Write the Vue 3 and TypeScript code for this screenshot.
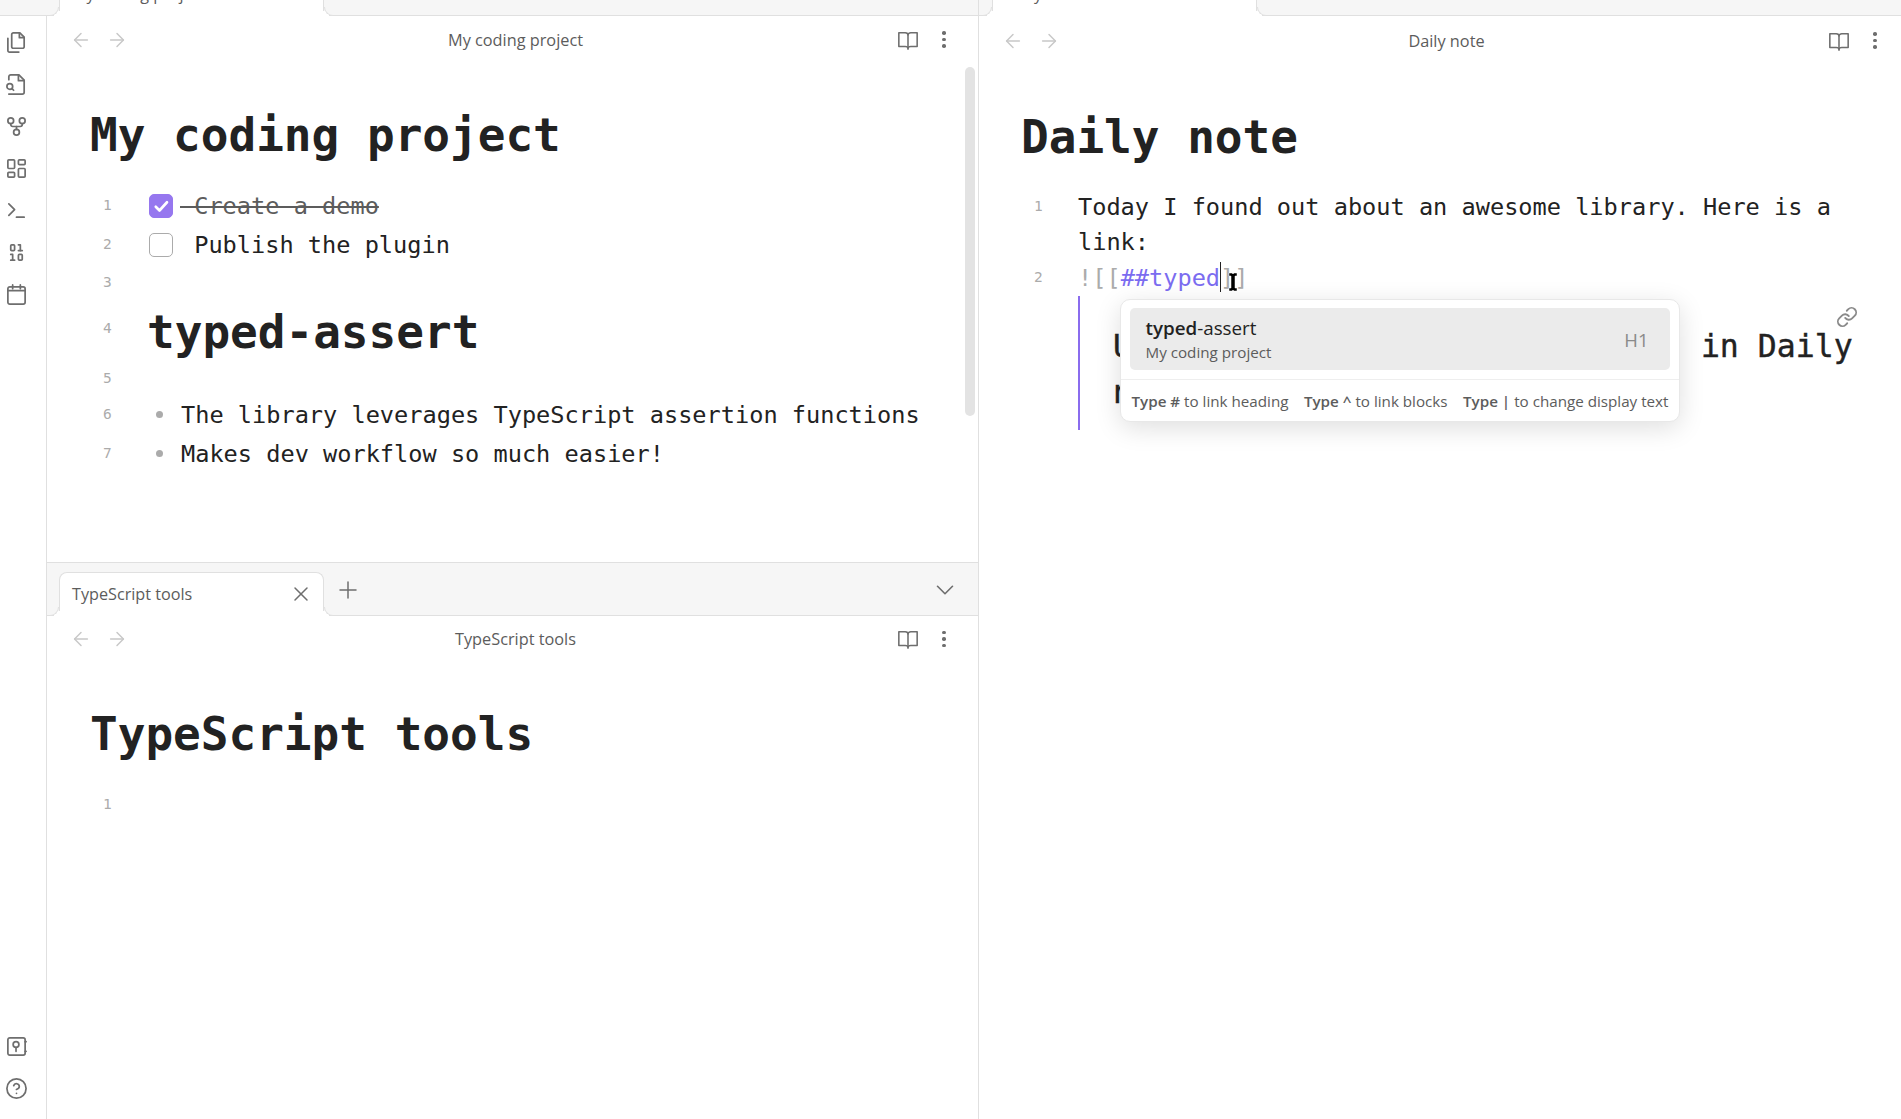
<script setup lang="ts">
const icons: Record<string, string> = {
  files: '<path d="M15.5 2H8.6c-.4 0-.8.2-1.1.5-.3.3-.5.7-.5 1.1v12.8c0 .4.2.8.5 1.1.3.3.7.5 1.1.5h9.8c.4 0 .8-.2 1.1-.5.3-.3.5-.7.5-1.1V6.5L15.5 2z"/><path d="M3 7.6v12.8c0 .4.2.8.5 1.1.3.3.7.5 1.1.5h9.8"/><path d="M15 2v5h5"/>',
  search: '<path d="M4 22h14a2 2 0 0 0 2-2V7.5L14.5 2H6a2 2 0 0 0-2 2v3"/><path d="M14 2v6h6"/><circle cx="5" cy="14" r="3"/><path d="m9 18-1.5-1.5"/>',
  graph: '<circle cx="12" cy="18" r="3"/><circle cx="6" cy="6" r="3"/><circle cx="18" cy="6" r="3"/><path d="M18 9v1a2 2 0 0 1-2 2H8a2 2 0 0 1-2-2V9"/><path d="M12 12v3"/>',
  dash: '<rect x="3" y="3" width="7" height="9" rx="1"/><rect x="14" y="3" width="7" height="5" rx="1"/><rect x="14" y="12" width="7" height="9" rx="1"/><rect x="3" y="16" width="7" height="5" rx="1"/>',
  terminal: '<path d="m4 17 6-6-6-6"/><path d="M12 19h8"/>',
  binary: '<rect x="14" y="14" width="4" height="6" rx="1"/><rect x="6" y="4" width="4" height="6" rx="1"/><path d="M6 20h4"/><path d="M14 10h4"/><path d="M6 14h2v6"/><path d="M14 4h2v6"/>',
  calendar: '<rect x="3" y="4" width="18" height="18" rx="2"/><path d="M16 2v4"/><path d="M8 2v4"/><path d="M3 8h18"/>',
  vault: '<rect x="3" y="3" width="18" height="18" rx="2"/><circle cx="11.5" cy="10" r="3"/><path d="M11.5 13v4"/><path d="M21 7h1"/><path d="M21 17h1"/>',
  help: '<circle cx="12" cy="12" r="10"/><path d="M9.09 9a3 3 0 0 1 5.83 1c0 2-3 3-3 3"/><path d="M12 17h.01"/>',
  book: '<path d="M2 4h7c1.5 0 3 1 3 2.5C12 5 13.500 4 15 4h7v15h-7c-1.500 0-3 .5-3 2 0-1.500-1.500-2-3-2H2z"/><path d="M12 6.500V22"/>',
  left: '<path d="m12 19-7-7 7-7"/><path d="M19 12H5"/>',
  right: '<path d="m12 5 7 7-7 7"/><path d="M5 12h14"/>',
  close: '<path d="M18 6 6 18"/><path d="m6 6 12 12"/>',
  plus: '<path d="M12 4v16"/><path d="M4 12h16"/>',
  chevron: '<path d="m6 9 6 6 6-6"/>',
  link: '<path d="M10 13a5 5 0 0 0 7.540.54l3-3a5 5 0 0 0-7.070-7.070l-1.720 1.710"/><path d="M14 11a5 5 0 0 0-7.540-.54l-3 3a5 5 0 0 0 7.070 7.070l1.710-1.710"/>'
}
const topRibbon: string[] = ['files', 'search', 'graph', 'dash', 'terminal', 'binary', 'calendar']
const bottomRibbon: string[] = ['vault', 'help']
</script>

<template>
  <div class="app">
    <aside class="ribbon">
      <div class="ribbon-cap"></div>
      <div class="ribbon-body">
        <svg v-for="n in topRibbon" :key="n" class="ico rib" viewBox="0 0 24 24" v-html="icons[n]"></svg>
        <div class="spacer"></div>
        <svg v-for="n in bottomRibbon" :key="n" class="ico rib" viewBox="0 0 24 24" v-html="icons[n]"></svg>
      </div>
    </aside>

    <section class="col left-col">
      <div class="pane top-pane">
        <div class="tabbar cut">
          <div class="tab"><span class="tab-title">My coding project</span></div>
          <div class="tab-rest"></div>
        </div>
        <header class="viewhead">
          <div class="nav">
            <svg class="ico faint" viewBox="0 0 24 24" v-html="icons.left"></svg>
            <svg class="ico faint" viewBox="0 0 24 24" v-html="icons.right"></svg>
          </div>
          <div class="viewtitle">My coding project</div>
          <div class="acts">
            <svg class="ico" viewBox="0 0 24 24" v-html="icons.book"></svg>
            <div class="dots"><i></i><i></i><i></i></div>
          </div>
        </header>
        <div class="editor">
          <h1 class="title">My coding project</h1>
          <div class="row r39"><span class="num">1</span><span class="check on"><svg viewBox="0 0 24 24"><path d="m5 13 5 5 10-11"/></svg></span><span class="done"> Create a demo</span></div>
          <div class="row r39"><span class="num">2</span><span class="check"></span><span class="txt"> Publish the plugin</span></div>
          <div class="row r37"><span class="num">3</span></div>
          <div class="row rh"><span class="num">4</span><span class="head">typed-assert</span></div>
          <div class="row r33"><span class="num">5</span></div>
          <div class="row r39"><span class="num">6</span><span class="bul"></span><span class="txt">The library leverages TypeScript assertion functions</span></div>
          <div class="row r39"><span class="num">7</span><span class="bul"></span><span class="txt">Makes dev workflow so much easier!</span></div>
        </div>
        <div class="scrollbar"></div>
      </div>

      <div class="pane low-pane">
        <div class="tabbar">
          <div class="tab">
            <span class="tab-title">TypeScript tools</span>
            <svg class="ico x" viewBox="0 0 24 24" v-html="icons.close"></svg>
          </div>
          <svg class="ico plus" viewBox="0 0 24 24" v-html="icons.plus"></svg>
          <div class="tab-rest"></div>
          <svg class="ico chev" viewBox="0 0 24 24" v-html="icons.chevron"></svg>
        </div>
        <header class="viewhead">
          <div class="nav">
            <svg class="ico faint" viewBox="0 0 24 24" v-html="icons.left"></svg>
            <svg class="ico faint" viewBox="0 0 24 24" v-html="icons.right"></svg>
          </div>
          <div class="viewtitle">TypeScript tools</div>
          <div class="acts">
            <svg class="ico" viewBox="0 0 24 24" v-html="icons.book"></svg>
            <div class="dots"><i></i><i></i><i></i></div>
          </div>
        </header>
        <div class="editor">
          <h1 class="title">TypeScript tools</h1>
          <div class="row r39"><span class="num">1</span></div>
        </div>
      </div>
    </section>

    <section class="col right-col">
      <div class="pane">
        <div class="tabbar cut">
          <div class="tab"><span class="tab-title">Daily note</span></div>
          <div class="tab-rest"></div>
        </div>
        <header class="viewhead">
          <div class="nav">
            <svg class="ico faint" viewBox="0 0 24 24" v-html="icons.left"></svg>
            <svg class="ico faint" viewBox="0 0 24 24" v-html="icons.right"></svg>
          </div>
          <div class="viewtitle">Daily note</div>
          <div class="acts">
            <svg class="ico" viewBox="0 0 24 24" v-html="icons.book"></svg>
            <div class="dots"><i></i><i></i><i></i></div>
          </div>
        </header>
        <div class="editor daily">
          <h1 class="title">Daily note</h1>
          <div class="row wrap"><span class="num">1</span><span class="para">Today I found out about an awesome library. Here is a link:</span></div>
          <div class="row wrap"><span class="num">2</span><span class="para"><span class="syn">![[</span><span class="lnk">##typed</span><span class="caret"></span><span class="syn">]]</span></span></div>
          <div class="embed">
            <div class="embed-text">Unable to find section ##typed in Daily note</div>
            <svg class="ico embed-link" viewBox="0 0 24 24" v-html="icons.link"></svg>
            <div class="suggest">
              <div class="item">
                <div class="item-main">
                  <div class="item-title"><b>typed</b>-assert</div>
                  <div class="item-sub">My coding project</div>
                </div>
                <div class="item-tag">H1</div>
              </div>
              <div class="hints">
                <span><b>Type #</b> to link heading</span>
                <span><b>Type ^</b> to link blocks</span>
                <span><b>Type |</b> to change display text</span>
              </div>
            </div>
          </div>
          <svg class="ibeam" viewBox="0 0 10 20"><path d="M1 1h3l1 1 1-1h3v3H7v12h2v3H6l-1-1-1 1H1v-3h2V4H1z" fill="#000" stroke="#fff" stroke-width=".5"/></svg>
        </div>
      </div>
    </section>
  </div>
</template>

<style scoped>
.app {
  width: 1901px;
  height: 1119px;
  display: flex;
  overflow: hidden;
  background: #fff;
  color: #222;
  font-family: "Open Sans", "Noto Sans", sans-serif;
}
.ico {
  width: 18px;
  height: 18px;
  fill: none;
  stroke: #6e6e6e;
  stroke-width: 2;
  stroke-linecap: round;
  stroke-linejoin: round;
  flex: none;
}
.faint { stroke: #c8c8c8; }

.ribbon { width: 47px; flex: none; display: flex; flex-direction: column; }
.ribbon-cap { height: 15px; flex: none; background: #f6f6f6; border-bottom: 1px solid #e0e0e0; }
.ribbon-body {
  flex: 1;
  border-right: 1px solid #e0e0e0;
  display: flex;
  flex-direction: column;
  align-items: center;
  gap: 19px;
  padding: 14.500px 13px 19.500px 0;
}
.rib { width: 23px; height: 23px; stroke-width: 1.8; }
.spacer { flex: 1; margin: -19px 0; }

.col { display: flex; flex-direction: column; }
.left-col { width: 931px; flex: none; border-right: 1px solid #e0e0e0; }
.right-col { flex: 1; min-width: 0; }
.pane { position: relative; display: flex; flex-direction: column; min-height: 0; }
.top-pane { height: 562px; flex: none; border-bottom: 1px solid #e0e0e0; }
.low-pane { flex: 1; }

.tabbar {
  height: 52px;
  flex: none;
  display: flex;
  align-items: flex-end;
  background: #f6f6f6;
  border-bottom: 1px solid #e0e0e0;
  padding-left: 12px;
  position: relative;
}
.tabbar.cut { height: 15px; }
.right-col .tabbar.cut { padding-left: 13px; }
.tab {
  position: relative;
  width: 265px;
  height: 44px;
  flex: none;
  margin-bottom: -1px;
  background: #fff;
  border: 1px solid #e0e0e0;
  border-bottom: none;
  border-radius: 8px 8px 0 0;
  display: flex;
  align-items: center;
  padding: 0 12px;
  box-sizing: border-box;
}
.tab::before,
.tab::after {
  content: "";
  position: absolute;
  bottom: 0;
  width: 9px;
  height: 9px;
  box-sizing: border-box;
  background: #f6f6f6;
  border-bottom: 1px solid #e0e0e0;
}
.tab::before {
  left: -10px;
  border-right: 1px solid #e0e0e0;
  border-bottom-right-radius: 9px;
  box-shadow: 4px 4px 0 #fff;
}
.tab::after {
  right: -10px;
  border-left: 1px solid #e0e0e0;
  border-bottom-left-radius: 9px;
  box-shadow: -4px 4px 0 #fff;
}
.tab-title { font-size: 16.200px; color: #5c5c5c; flex: 1; white-space: nowrap; position: relative; top: -1px; }
.x { width: 24px; height: 24px; stroke-width: 1.5; margin-right: -2px; position: relative; top: -1px; }
.plus { width: 24px; height: 24px; margin: 0 0 13px 12px; stroke-width: 1.5; }
.tab-rest { flex: 1; }
.chev { width: 30px; height: 30px; margin: 0 18px 10px 0; stroke-width: 1.3; }

.viewhead {
  height: 49px;
  flex: none;
  display: grid;
  grid-template-columns: 1fr auto 1fr;
  align-items: center;
  padding: 0 20px 0 33px;
}
.left-col .viewhead { height: 47px; padding: 0 28px 0 34px; }
.left-col .low-pane .viewhead { height: 46px; }
.left-col .nav { margin-left: -11px; }
.nav { display: flex; gap: 14px; margin-left: -10px; }
.nav .ico { width: 22px; height: 22px; stroke-width: 1.6; }
.viewtitle { font-size: 16.300px; color: #5c5c5c; }
.acts { display: flex; justify-content: flex-end; align-items: center; gap: 19px; }
.acts .ico { width: 22px; height: 22px; stroke-width: 1.7; }
.dots { width: 12px; display: flex; flex-direction: column; align-items: center; gap: 3px; }
.dots i { width: 3.500px; height: 3.500px; border-radius: 50%; background: #6e6e6e; }

.editor {
  position: relative;
  padding: 0 0 0 43px;
  font-family: "DejaVu Sans Mono", "Liberation Mono", monospace;
  font-size: 23.600px;
}
.daily { padding-left: 42px; }
.title {
  margin: 0;
  padding-top: 44px;
  height: 79.200px;
  font-size: 46px;
  line-height: 56px;
  font-weight: 700;
  color: #222;
  box-sizing: content-box;
}
.daily .title { height: 80.800px; }
.row { position: relative; display: flex; align-items: center; padding-left: 59px; white-space: pre; }
.r39 { height: 39px; }
.r37 { height: 37px; }
.r33 { height: 33px; }
.rh { height: 61px; }
.num {
  position: absolute;
  left: 13px;
  top: calc(50% - 1px);
  transform: translateY(-50%);
  font-size: 14.500px;
  color: #ababab;
}
.rh .num { top: calc(50% - 4px); }
.check {
  width: 24px;
  height: 24px;
  flex: none;
  border: 1px solid #ababab;
  border-radius: 5px;
  box-sizing: border-box;
  display: flex;
  align-items: center;
  justify-content: center;
  margin-right: 7px;
}
.check.on { background: #9677ef; border-color: #9677ef; }
.check svg { width: 18px; height: 18px; fill: none; stroke: #fff; stroke-width: 3.500; stroke-linecap: round; stroke-linejoin: round; }
.done { color: #5c5c5c; text-decoration: line-through; text-decoration-thickness: 2px; }
.head { font-size: 46px; font-weight: 700; margin-left: -2px; }
.bul { width: 7px; height: 7px; border-radius: 50%; background: #ababab; flex: none; margin: 0 18px 0 7px; }
.scrollbar {
  position: absolute;
  left: 918px;
  top: 67px;
  width: 10px;
  height: 349px;
  border-radius: 5px;
  background: #e3e3e3;
}

.daily .row { padding-left: 57px; }
.daily .row.wrap { display: block; white-space: normal; line-height: 35.500px; }
.daily .num { top: 17.500px; }
.para { display: block; width: 770px; }
.syn { color: #ababab; }
.lnk { color: #7b6cf0; }
.caret { display: inline-block; width: 1px; height: 30px; background: #222; vertical-align: -6px; margin-right: -1px; }
.embed {
  position: relative;
  margin-left: 56.500px;
  height: 134px;
  width: 785px;
  border-left: 2px solid #8a6cee;
  box-sizing: border-box;
  padding: 27px 0 0 33.500px;
}
.embed-text { font-size: 31.500px; line-height: 46px; color: #222; -webkit-text-stroke: .4px #222; }
.embed-link { position: absolute; left: 756px; top: 10px; width: 22px; height: 22px; stroke: #8a8a8a; }
.suggest {
  position: absolute;
  left: 40px;
  top: 3px;
  width: 560px;
  height: 123px;
  box-sizing: border-box;
  background: #fff;
  border: 1px solid #e8e8e8;
  border-radius: 10px;
  box-shadow: 0 6px 26px rgba(0, 0, 0, .13);
  padding: 8px 9px 8px 8px;
  font-family: "Open Sans", "Noto Sans", sans-serif;
}
.item {
  height: 62px;
  margin-left: 1px;
  background: #ebebeb;
  border-radius: 5px;
  display: flex;
  align-items: center;
  justify-content: space-between;
  padding: 0 21px 0 16px;
}
.item-title { font-size: 18.800px; line-height: 25px; color: #222; }
.item-title b { font-weight: 600; }
.item-sub { font-size: 15.200px; line-height: 22px; color: #5c5c5c; }
.item-tag { font-size: 18.500px; color: #8a8a8a; }
.hints {
  margin: 9px -9px 0 -8px;
  padding: 11px 10px 0 11px;
  border-top: 1px solid #eee;
  display: flex;
  justify-content: space-between;
  font-size: 15.200px;
  color: #5c5c5c;
  white-space: nowrap;
}
.hints b { font-weight: 600; }
.ibeam { position: absolute; left: 249px; top: 207px; width: 10px; height: 20px; }
</style>

<style>
html, body { margin: 0; padding: 0; overflow: hidden; background: #fff; }
</style>
